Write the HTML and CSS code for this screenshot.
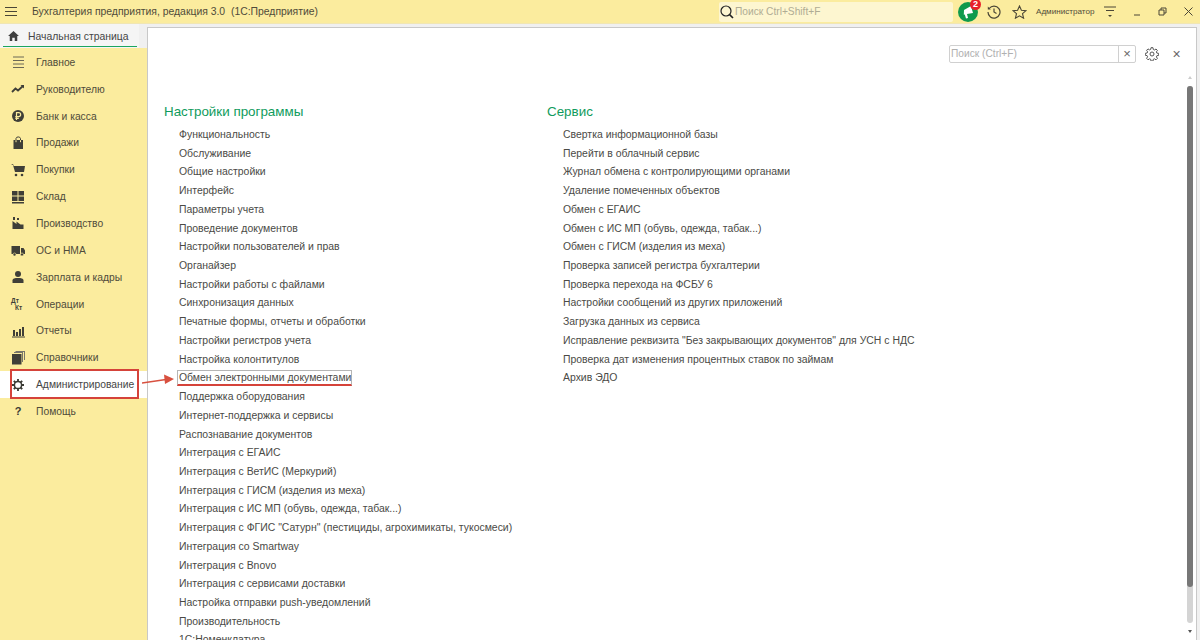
FILE: index.html
```html
<!DOCTYPE html>
<html lang="ru">
<head>
    <meta charset="UTF-8" />
    <title>Бухгалтерия предприятия</title>
    <link rel="stylesheet" href="styles.css">
</head>
<body>

<!-- Верхняя полоса -->
<div class="titlebar">
    <svg class="burger" width="12" height="9" viewBox="0 0 12 9"><path d="M0 .5h12M0 4.500h12M0 8.500h12" stroke="#4a4636" stroke-width="1"/></svg>
    <div class="app-title">Бухгалтерия предприятия, редакция 3.0&nbsp; (1С:Предприятие)</div>
    <div class="global-search">
        <svg width="14" height="14" viewBox="0 0 14 14"><circle cx="6" cy="6" r="5" fill="none" stroke="#222" stroke-width="1.2"/><path d="M9.6 9.6l3.4 3.4" stroke="#222" stroke-width="1.6"/></svg>
        <span>Поиск Ctrl+Shift+F</span>
    </div>
    <div class="bell">
        <svg width="20" height="20" viewBox="0 0 20 20"><circle cx="10" cy="10" r="10" fill="#0f9a4c"/><path d="M6 8l7-4 2 7-6 1 1 4-2 .5-1.200-4-1 .2z" fill="#fff"/></svg>
        <span class="badge">2</span>
    </div>
    <svg class="tool-icon hist" width="14" height="14" viewBox="0 0 14 14"><path d="M2.200 3.500A6 6 0 1 1 1 7" fill="none" stroke="#4a4636" stroke-width="1.200"/><path d="M.8 1.500v3h3z" fill="#4a4636"/><path d="M7 3.500V7l2.500 1.500" fill="none" stroke="#4a4636" stroke-width="1.200"/></svg>
    <svg class="tool-icon star" width="15" height="14" viewBox="0 0 15 14"><path d="M7.500 1l1.900 4.300 4.600.4-3.500 3 1.100 4.500-4.100-2.400-4.100 2.400 1.100-4.500-3.500-3 4.600-.4z" fill="none" stroke="#4a4636" stroke-width="1.100"/></svg>
    <div class="user">Администратор</div>
    <svg class="tool-icon user-menu" width="12" height="12" viewBox="0 0 12 12"><path d="M0 1h12M2 4.500h8" stroke="#4a4636" stroke-width="1"/><path d="M4 9h4l-2 2z" fill="#4a4636"/></svg>
    <svg class="tool-icon win-min" width="8" height="8" viewBox="0 0 8 8"><path d="M1 7h6" stroke="#4a4636" stroke-width="1"/></svg>
    <svg class="tool-icon win-max" width="9" height="9" viewBox="0 0 9 9"><path d="M1 3h5v5H1zM3 3V1h5v5H6" fill="none" stroke="#4a4636" stroke-width="1"/></svg>
    <svg class="tool-icon win-close" width="9" height="9" viewBox="0 0 9 9"><path d="M.5.500l8 8M8.500.500l-8 8" stroke="#4a4636" stroke-width="1"/></svg>
</div>

<div class="workspace">

    <!-- Левая панель -->
    <div class="side">
        <div class="home-tab">
            <svg width="11" height="10" viewBox="0 0 13 12"><path d="M6.500 0L13 6h-2v6H8V8H5v4H2V6H0z" fill="#3f3f3f"/></svg>
            <span>Начальная страница</span>
        </div>
        <div class="nav">
            <div class="nav-item">
                <svg width="14" height="14" viewBox="0 0 14 14"><path d="M2 2h11M2 5.500h11M2 9h11M2 12.500h11" stroke="#6b6856" stroke-width="1"/></svg>
                <span>Главное</span>
            </div>
            <div class="nav-item">
                <svg width="14" height="14" viewBox="0 0 14 14"><path d="M1 10l3.500-3.500 2.500 2L12 4" fill="none" stroke="#3f3f38" stroke-width="1.800"/><path d="M9.500 3H13v3.500z" fill="#3f3f38"/></svg>
                <span>Руководителю</span>
            </div>
            <div class="nav-item">
                <svg width="14" height="14" viewBox="0 0 14 14"><circle cx="7" cy="7" r="6" fill="#3f3f38"/><path d="M5.500 11V3.700h2.200a1.900 1.900 0 0 1 0 3.900H4.300M4.300 9.300h3.500" fill="none" stroke="#fbec9e" stroke-width="1.200"/></svg>
                <span>Банк и касса</span>
            </div>
            <div class="nav-item">
                <svg width="14" height="14" viewBox="0 0 14 14"><path d="M2.500 4h9.500v9H2.500z" fill="#3f3f38"/><path d="M5 6V2.500a2.300 2 0 0 1 4.500 0V6" fill="none" stroke="#3f3f38" stroke-width="1"/><path d="M5 4.200v2M9.500 4.200v2" stroke="#fbec9e" stroke-width="1"/></svg>
                <span>Продажи</span>
            </div>
            <div class="nav-item">
                <svg width="14" height="14" viewBox="0 0 14 14"><path d="M0 1h2l.8 2H14l-1 6H4L2 2" fill="#3f3f38"/><circle cx="5" cy="12" r="1.300" fill="#3f3f38"/><circle cx="11" cy="12" r="1.300" fill="#3f3f38"/></svg>
                <span>Покупки</span>
            </div>
            <div class="nav-item">
                <svg width="14" height="14" viewBox="0 0 14 14"><path d="M1 1h5.500v4.500H1zM7.500 1H13v4.500H7.500zM1 6.500h5.500V11H1zM7.500 6.500H13V11H7.500zM1 12h12v1.500H1z" fill="#3f3f38"/></svg>
                <span>Склад</span>
            </div>
            <div class="nav-item">
                <svg width="14" height="14" viewBox="0 0 14 14"><path d="M1.500 13V5l4 3V5.500l4 3h3V13zM2 1h2v3H2zM6 2h2v2H6z" fill="#3f3f38"/></svg>
                <span>Производство</span>
            </div>
            <div class="nav-item">
                <svg width="14" height="14" viewBox="0 0 14 14"><path d="M.5 3h8.500v8H.5zM10 5h2.500L14 7.500V11h-4z" fill="#3f3f38"/><circle cx="3.500" cy="11.500" r="1.500" fill="#3f3f38" stroke="#fbec9e" stroke-width=".6"/><circle cx="11" cy="11.500" r="1.500" fill="#3f3f38" stroke="#fbec9e" stroke-width=".6"/></svg>
                <span>ОС и НМА</span>
            </div>
            <div class="nav-item">
                <svg width="14" height="14" viewBox="0 0 14 14"><circle cx="7" cy="4" r="3" fill="#3f3f38"/><path d="M1.500 13v-2.500C1.500 8.500 4 8 7 8s5.500.5 5.500 2.500V13z" fill="#3f3f38"/></svg>
                <span>Зарплата и кадры</span>
            </div>
            <div class="nav-item">
                <div class="dt-kt"><b>Дт</b><b class="kt">Кт</b></div>
                <span>Операции</span>
            </div>
            <div class="nav-item">
                <svg width="14" height="14" viewBox="0 0 14 14"><path d="M2 6h2v6H2zM5 8h2v4H5zM8 5h2v7H8zM11 3h2v9h-2zM1 12.500h13v1H1z" fill="#3f3f38"/></svg>
                <span>Отчеты</span>
            </div>
            <div class="nav-item">
                <svg width="14" height="14" viewBox="0 0 14 14"><path d="M1 3h9.500v10.500H1z" fill="#3f3f38"/><path d="M3 1h9v10h-1V2H3zM4.500 0H14v9h-1V1H4.500z" fill="#77756a"/></svg>
                <span>Справочники</span>
            </div>
            <div class="nav-item active">
                <svg width="14" height="14" viewBox="0 0 14 14"><circle cx="7" cy="7" r="3.600" fill="none" stroke="#3a3a34" stroke-width="1.500"/><path d="M7 1v2.500M7 10.500V13M1 7h2.500M10.500 7H13M2.800 2.800l1.700 1.700M9.500 9.500l1.700 1.700M11.200 2.800L9.500 4.500M4.500 9.500l-1.700 1.700" stroke="#3a3a34" stroke-width="1.800"/></svg>
                <span>Администрирование</span>
                <div class="red-box"></div>
            </div>
            <div class="nav-item">
                <div class="help-mark">?</div>
                <span>Помощь</span>
            </div>
        </div>
    </div>

    <!-- Начальная страница -->
    <div class="page">
        <div class="page-tools">
            <div class="form-search">
                <span class="form-search-text">Поиск (Ctrl+F)</span>
                <span class="form-search-clear">×</span>
            </div>
            <svg class="gear" width="14" height="14" viewBox="0 0 14 14"><circle cx="7" cy="7" r="2" fill="none" stroke="#555" stroke-width="1"/><path d="M6 .7h2l.3 1.800 1.200.5 1.500-1 1.400 1.400-1 1.500.5 1.200 1.800.3v2l-1.800.3-.5 1.200 1 1.500-1.400 1.400-1.500-1-1.200.5-.3 1.800H6l-.3-1.800-1.200-.5-1.500 1L1.600 11.300l1-1.500-.5-1.200L.3 8.300v-2l1.800-.3.500-1.200-1-1.500L3 1.900l1.500 1 1.200-.5z" fill="none" stroke="#555" stroke-width="1"/></svg>
            <span class="page-close">×</span>
        </div>

        <div class="columns">
            <div class="col col-left">
                <h2>Настройки программы</h2>
                <a>Функциональность</a>
                <a>Обслуживание</a>
                <a>Общие настройки</a>
                <a>Интерфейс</a>
                <a>Параметры учета</a>
                <a>Проведение документов</a>
                <a>Настройки пользователей и прав</a>
                <a>Органайзер</a>
                <a>Настройки работы с файлами</a>
                <a>Синхронизация данных</a>
                <a>Печатные формы, отчеты и обработки</a>
                <a>Настройки регистров учета</a>
                <a>Настройка колонтитулов</a>
                <a class="current"><span>Обмен электронными документами</span></a>
                <a>Поддержка оборудования</a>
                <a>Интернет-поддержка и сервисы</a>
                <a>Распознавание документов</a>
                <a>Интеграция с ЕГАИС</a>
                <a>Интеграция с ВетИС (Меркурий)</a>
                <a>Интеграция с ГИСМ (изделия из меха)</a>
                <a>Интеграция с ИС МП (обувь, одежда, табак...)</a>
                <a>Интеграция с ФГИС "Сатурн" (пестициды, агрохимикаты, тукосмеси)</a>
                <a>Интеграция со Smartway</a>
                <a>Интеграция с Bnovo</a>
                <a>Интеграция с сервисами доставки</a>
                <a>Настройка отправки push-уведомлений</a>
                <a>Производительность</a>
                <a>1С:Номенклатура</a>
            </div>
            <div class="col col-right">
                <h2>Сервис</h2>
                <a>Свертка информационной базы</a>
                <a>Перейти в облачный сервис</a>
                <a>Журнал обмена с контролирующими органами</a>
                <a>Удаление помеченных объектов</a>
                <a>Обмен с ЕГАИС</a>
                <a>Обмен с ИС МП (обувь, одежда, табак...)</a>
                <a>Обмен с ГИСМ (изделия из меха)</a>
                <a>Проверка записей регистра бухгалтерии</a>
                <a>Проверка перехода на ФСБУ 6</a>
                <a>Настройки сообщений из других приложений</a>
                <a>Загрузка данных из сервиса</a>
                <a>Исправление реквизита "Без закрывающих документов" для УСН с НДС</a>
                <a>Проверка дат изменения процентных ставок по займам</a>
                <a>Архив ЭДО</a>
            </div>
        </div>

        <div class="scroll">
            <div class="scroll-up"></div>
            <div class="scroll-track"><div class="scroll-thumb"></div></div>
            <div class="scroll-down"></div>
        </div>
    </div>
</div>

<!-- Стрелка-пометка -->
<svg class="arrow" width="32" height="12" viewBox="0 0 32 12"><path d="M0 10L24 6.500" stroke="#d8503f" stroke-width="1.300"/><path d="M22 1.500L32 6l-9 5z" fill="#d8503f"/></svg>

</body>
</html>
```

FILE: styles.css
```css
/* ---- общее ---- */
html, body {
    height: 100%;
}

body {
    margin: 0;
    height: 640px;
    overflow: hidden;
    position: relative;
    display: flex;
    flex-direction: column;
    background: #fff;
    color: #4a4a46;
    font-family: "Liberation Sans", Arial, sans-serif;
    font-size: 10.500px;
}

/* ---- верхняя полоса ---- */
.titlebar {
    height: 23px;
    flex: none;
    display: flex;
    align-items: center;
    background: #fbec9e;
    border-bottom: 1px solid #f0e6b4;
}

.burger {
    margin-left: 5px;
}

.app-title {
    margin-left: 15px;
    width: 687px;
    color: #4f4b3a;
    font-size: 10.400px;
}

.global-search {
    width: 234px;
    height: 20px;
    display: flex;
    align-items: center;
    gap: 1px;
    padding-left: 1px;
    box-sizing: border-box;
    background: #fdf6d0;
    border-radius: 2px;
    color: #b0ac94;
    font-size: 10.200px;
}

.bell {
    position: relative;
    width: 20px;
    height: 20px;
    margin-left: 5px;
}

.badge {
    position: absolute;
    top: -3px;
    right: -3px;
    width: 11px;
    height: 11px;
    border-radius: 50%;
    background: #e8202a;
    color: #fff;
    font-size: 9px;
    font-weight: bold;
    line-height: 11px;
    text-align: center;
}

.hist {
    margin-left: 9px;
}

.star {
    margin-left: 11px;
}

.user {
    margin-left: 9px;
    width: 68px;
    color: #4f4b3a;
    font-size: 8.100px;
}

.user-menu {
    margin-left: 0;
}

.win-min {
    margin-left: 17px;
}

.win-max {
    margin-left: 17px;
}

.win-close {
    margin-left: 17px;
}

/* ---- рабочая область ---- */
.workspace {
    flex: 1;
    display: flex;
    min-height: 0;
    background: #f0f0f0;
}

.side {
    width: 147px;
    flex: none;
    display: flex;
    flex-direction: column;
}

.home-tab {
    height: 24px;
    flex: none;
    width: 139px;
    box-sizing: border-box;
    display: flex;
    align-items: center;
    gap: 9px;
    padding-left: 8px;
    background: #f5f5f5;
    position: relative;
    color: #454545;
    font-size: 10.400px;
}

.home-tab::after {
    content: "";
    position: absolute;
    left: 3px;
    right: 2px;
    bottom: 1px;
    height: 1px;
    background: #1ba55f;
}

.nav {
    flex: 1;
    background: #fbec9e;
    padding-top: 1px;
}

.nav-item {
    height: 26.850px;
    display: flex;
    align-items: center;
    gap: 11px;
    padding-left: 11px;
    position: relative;
    color: #4f4b3a;
    font-size: 10.300px;
}

.nav-item svg {
    flex: none;
}

.nav-item.active {
    background: #fff;
    color: #454545;
}

.red-box {
    position: absolute;
    left: 10px;
    top: -2px;
    width: 129px;
    height: 30px;
    box-sizing: border-box;
    border: 2px solid #d5433a;
}

.dt-kt {
    width: 14px;
    height: 14px;
    position: relative;
    flex: none;
    color: #3f3f38;
    font-size: 6.500px;
    line-height: 7px;
}

.dt-kt .kt {
    position: absolute;
    left: 4px;
    top: 7px;
}

.help-mark {
    width: 14px;
    flex: none;
    text-align: center;
    color: #3a3a34;
    font-size: 11px;
    font-weight: bold;
}

/* ---- страница ---- */
.page {
    flex: 1;
    position: relative;
    margin: 3px 3px 0 0;
    background: #fff;
    border: 1px solid #c8c8c8;
    border-bottom: 0;
    overflow: hidden;
}

.page-tools {
    height: 18px;
    margin-top: 17px;
    display: flex;
    align-items: center;
    justify-content: flex-end;
}

.form-search {
    width: 187px;
    height: 18px;
    box-sizing: border-box;
    display: flex;
    border: 1px solid #d0d0d0;
    border-radius: 2px;
    line-height: 16px;
}

.form-search-text {
    flex: 1;
    padding-left: 1px;
    color: #b0b0b0;
    font-size: 10.200px;
}

.form-search-clear {
    width: 16px;
    border-left: 1px solid #d0d0d0;
    text-align: center;
    color: #666;
    font-size: 13px;
}

.gear {
    margin-left: 9px;
}

.page-close {
    width: 11px;
    margin: 0 14px 0 12px;
    text-align: center;
    color: #666;
    font-size: 14px;
}

.columns {
    display: flex;
    margin-top: 40px;
    padding-left: 16px;
}

.col {
    display: flex;
    flex-direction: column;
    white-space: nowrap;
}

.col-left {
    width: 383px;
    flex: none;
}

.col h2 {
    margin: 0 0 5px;
    font-size: 13.400px;
    font-weight: normal;
    line-height: 18px;
    color: #0f9b5c;
}

.col a {
    height: 18.730px;
    line-height: 18.730px;
    padding-left: 15px;
    color: #4a4a46;
    font-size: 10.450px;
}

.col-right a {
    padding-left: 16px;
}

.col a.current span {
    display: inline-block;
    height: 13px;
    line-height: 13px;
    margin-left: -2px;
    padding: 0 0 0 1px;
    border: 1px solid #b5b5b5;
    border-bottom: 2px solid #d5433a;
}

/* ---- прокрутка ---- */
.scroll {
    position: absolute;
    top: 48px;
    right: 3px;
    bottom: 7px;
    width: 6px;
    display: flex;
    flex-direction: column;
    align-items: center;
}

.scroll-track {
    flex: 1;
    width: 6px;
    margin: 7px 0;
    border-radius: 3px;
    background: #d4d4d4;
}

.scroll-thumb {
    height: 93.300%;
    border-radius: 3px;
    background: #777;
}

.scroll-up,
.scroll-down {
    width: 0;
    height: 0;
    border-left: 2px solid transparent;
    border-right: 2px solid transparent;
}

.scroll-up {
    border-bottom: 3px solid #ccc;
}

.scroll-down {
    border-top: 3px solid #555;
}

/* ---- пометка поверх экрана ---- */
.arrow {
    position: absolute;
    left: 142px;
    top: 373px;
}
```
